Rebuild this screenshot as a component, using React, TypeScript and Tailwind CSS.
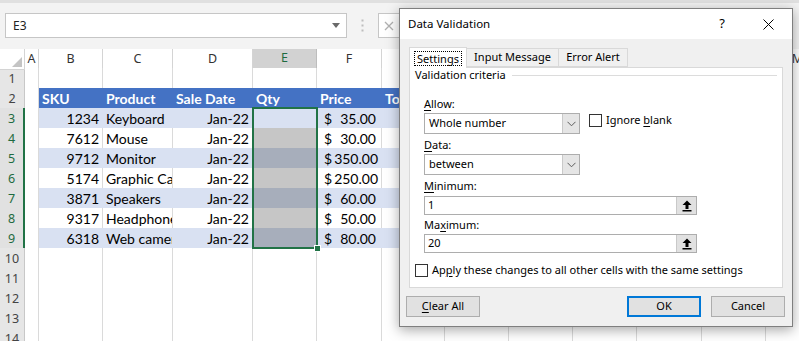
import React from "react";

const GRID =
  "grid grid-cols-[25px_14px_64px_70px_80px_64px_65px_63px_64px_64px_64px_65px_64px_64px]";
const LETTERS = ["A", "B", "C", "D", "E", "F", "G", "H", "I", "J", "K", "L", "M"];
const HEADS = ["", "SKU", "Product", "Sale Date", "Qty", "Price", "Total"];

const ITEMS = [
  { sku: "1234", product: "Keyboard", price: "35.00" },
  { sku: "7612", product: "Mouse", price: "30.00" },
  { sku: "9712", product: "Monitor", price: "350.00" },
  { sku: "5174", product: "Graphic Card", price: "250.00" },
  { sku: "3871", product: "Speakers", price: "60.00" },
  { sku: "9317", product: "Headphones", price: "50.00" },
  { sku: "6318", product: "Web camera", price: "80.00" },
];

const UI = "[font-family:'Noto_Sans',sans-serif]";
const SHEET = "[font-family:Lato,sans-serif]";

function Cell({ r, c }: { r: number; c: number }) {
  const inTable = r >= 2 && r <= 9 && c >= 1 && c <= 6;
  const isHead = inTable && r === 2;
  const item = inTable && r >= 3 ? ITEMS[r - 3] : null;
  const banded = inTable && r >= 3 && r % 2 === 1;
  const selected = c === 4 && r >= 4 && r <= 9;

  let tone = "bg-white border-r-[#dadada] border-b-[#dadada]";
  if (isHead) tone = "bg-[#4472c4] border-r-[#4472c4] border-b-[#8ea9db] text-white font-bold";
  else if (selected)
    tone =
      r % 2 === 1
        ? "bg-[#a7aebb] border-r-[#a7aebb] border-b-[#8e9ab3]"
        : "bg-[#c6c6c6] border-r-[#c6c6c6] border-b-[#8e9ab3]";
  else if (banded) tone = "bg-[#d9e1f2] border-r-[#d9e1f2] border-b-[#8ea9db]";
  else if (inTable) tone = "bg-white border-r-[#dadada] border-b-[#8ea9db]";

  let content: React.ReactNode = null;
  let align = "justify-start pl-[3px]";
  if (isHead) {
    content = HEADS[c];
  } else if (item) {
    if (c === 1) {
      content = item.sku;
      align = "justify-end pr-[3px]";
    } else if (c === 2) {
      content = item.product;
    } else if (c === 3) {
      content = "Jan-22";
      align = "justify-end pr-[3px]";
    } else if (c === 5) {
      content = (
        <>
          <span>$</span>
          <span>{item.price}</span>
        </>
      );
      align = "justify-between pl-[7px] pr-[5px] gap-[2px]";
    }
  }

  return (
    <div
      className={`flex items-start pt-[2px] overflow-hidden whitespace-nowrap border-r border-b leading-[17px] ${align} ${tone}`}
    >
      {content}
    </div>
  );
}

function RowHead({ r }: { r: number }) {
  const sel = r >= 3 && r <= 9;
  return (
    <div
      className={`flex items-center justify-center pt-[2px] border-b border-b-[#d4d4d4] ${UI} text-[12.5px] ${
        sel
          ? "bg-[#e1e1e1] text-[#1e6b40] border-r-2 border-r-[#217346]"
          : "bg-[#e6e6e6] text-[#444] border-r border-r-[#c8c8c8]"
      }`}
    >
      {r}
    </div>
  );
}

function Chevron() {
  return (
    <svg width="9" height="6" viewBox="0 0 9 6" fill="none">
      <path d="M0.5 0.8L4.5 4.8L8.5 0.8" stroke="#5c5c5c" strokeWidth="1" />
    </svg>
  );
}

function UpArrow() {
  return (
    <svg width="10" height="12" viewBox="0 0 10 12">
      <path d="M5 0.5L9.5 5H6.5V9H3.5V5H0.5Z" fill="#000" />
      <rect x="0.5" y="10" width="9" height="1.5" fill="#000" />
    </svg>
  );
}

function Select({ value }: { value: string }) {
  return (
    <div className="w-[156px] h-[21px] border border-[#adadad] bg-white flex">
      <div className="flex-1 flex items-center pl-[4px]">{value}</div>
      <div className="w-[17px] bg-[#e5e5e5] border-l border-[#c9c9c9] flex items-center justify-center">
        <Chevron />
      </div>
    </div>
  );
}

function RefInput({ value }: { value: string }) {
  return (
    <div className="w-[273px] h-[19px] border border-[#adadad] bg-white flex">
      <div className="flex-1 flex items-center pl-[3px]">{value}</div>
      <div className="w-[20px] bg-[#e1e1e1] border-l border-[#c9c9c9] flex items-center justify-center">
        <UpArrow />
      </div>
    </div>
  );
}

function Check() {
  return <span className="w-[13px] h-[13px] border border-[#333] bg-white shrink-0" />;
}

function U({ children }: { children: React.ReactNode }) {
  return <span className="underline decoration-1 underline-offset-[2px]">{children}</span>;
}

export default function App() {
  const rows = Array.from({ length: 14 }, (_, i) => i + 1);

  return (
    <div className="relative w-[799px] h-[341px] overflow-hidden bg-white">
      {/* formula bar */}
      <div className="h-[49px] bg-[#f3f3f3] border-t-[3px] border-[#e0e0e0] flex items-start pt-[10px]">
        <div className={`ml-[5px] w-[342px] h-[25px] bg-white border border-[#c6c6c6] flex items-center pl-[7px] pr-[6px] ${UI} text-[12px] text-[#222]`}>
          <span>E3</span>
          <svg className="ml-auto" width="8" height="5" viewBox="0 0 8 5">
            <path d="M0 0H8L4 5Z" fill="#6a6a6a" />
          </svg>
        </div>
        <div className="w-[31px] h-[25px] flex items-center justify-center">
          <svg width="3" height="13" viewBox="0 0 3 13">
            <rect x="0.5" y="0.5" width="2" height="2" fill="#bdbdbd" />
            <rect x="0.5" y="5.5" width="2" height="2" fill="#bdbdbd" />
            <rect x="0.5" y="10.5" width="2" height="2" fill="#bdbdbd" />
          </svg>
        </div>
        <div className="w-[120px] h-[25px] bg-white border border-[#c6c6c6] flex items-center pl-[5px]">
          <svg width="10" height="10" viewBox="0 0 10 10">
            <path d="M1 1L9 9M9 1L1 9" stroke="#b0b0b0" strokeWidth="1.3" />
          </svg>
        </div>
      </div>

      {/* sheet */}
      <div className={`relative ${SHEET} text-[14px] text-black`}>
        <div className={`${GRID} h-[19px]`}>
          <div className="relative bg-white border-r border-b border-[#d4d4d4]">
            <svg className="absolute right-[2px] bottom-[2px]" width="10" height="10" viewBox="0 0 10 10">
              <path d="M10 0V10H0Z" fill="#c4c4c4" />
            </svg>
          </div>
          {LETTERS.map((l) => (
            <div
              key={l}
              className={`flex items-center justify-center ${UI} text-[12.5px] ${
                l === "E"
                  ? "bg-[#d2d2d2] text-[#1e6b40] border-r border-r-[#bdbdbd] border-b-2 border-b-[#217346]"
                  : "bg-white text-[#333] border-r border-b border-[#d4d4d4]"
              }`}
            >
              {l}
            </div>
          ))}
        </div>

        {rows.map((r) => (
          <div key={r} className={`${GRID} h-[20px]`}>
            <RowHead r={r} />
            {LETTERS.map((l, c) => (
              <Cell key={l} r={r} c={c} />
            ))}
          </div>
        ))}

        {/* selection E3:E9 */}
        <div className="absolute left-[252px] top-[58px] w-[66px] h-[142px] border-2 border-[#217346]">
          <div className="absolute right-[-5px] bottom-[-5px] w-[7px] h-[7px] bg-[#217346] border border-white" />
        </div>
      </div>

      {/* Data Validation dialog */}
      <div
        className={`absolute left-[399px] top-[8px] w-[394px] h-[319px] border border-[#7f7f7f] bg-[#f0f0f0] shadow-[0_3px_12px_rgba(0,0,0,0.35)] flex flex-col ${UI} text-[11px] text-black`}
      >
        <div className="h-[30px] bg-white flex items-center pl-[8px] shrink-0">
          <span className="text-[11.5px]">Data Validation</span>
          <span className="ml-auto text-[13px]">?</span>
          <svg className="ml-[38px] mr-[18px]" width="11" height="11" viewBox="0 0 11 11">
            <path d="M0.5 0.5L10.5 10.5M10.5 0.5L0.5 10.5" stroke="#000" strokeWidth="1" />
          </svg>
        </div>

        <div className="pt-[8px] pl-[9px] flex items-end whitespace-nowrap">
          <div className="h-[21px] w-[58px] bg-white border border-b-0 border-[#d9d9d9] -mb-px relative z-10 flex items-center justify-center">
            <span className="border border-dotted border-black px-[2px] leading-[13px]">Settings</span>
          </div>
          <div className="h-[19px] w-[92px] border border-[#d9d9d9] border-l-0 flex items-center justify-center">
            Input Message
          </div>
          <div className="h-[19px] w-[69px] border border-[#d9d9d9] border-l-0 flex items-center justify-center">
            Error Alert
          </div>
        </div>

        <div className="ml-[9px] w-[374px] h-[221px] bg-white border border-[#d9d9d9] flex flex-col">
          <div className="h-[15px] flex items-center pl-[5px] pr-[5px]">
            <span>Validation criteria</span>
            <span className="flex-1 h-px bg-[#dcdcdc] ml-[6px]" />
          </div>

          <div className="ml-[14px] mt-[13px] h-[16px] flex items-center">
            <span>
              <U>A</U>llow:
            </span>
          </div>
          <div className="ml-[14px] mt-[1px] flex items-center">
            <Select value="Whole number" />
            <div className="ml-[9px] flex items-center gap-[4px] -mt-[6px]">
              <Check />
              <span>
                Ignore <U>b</U>lank
              </span>
            </div>
          </div>

          <div className="ml-[14px] mt-[3px] h-[16px] flex items-center">
            <span>
              <U>D</U>ata:
            </span>
          </div>
          <div className="ml-[14px] mt-[1px]">
            <Select value="between" />
          </div>

          <div className="ml-[14px] mt-[3px] h-[16px] flex items-center">
            <span>
              <U>M</U>inimum:
            </span>
          </div>
          <div className="ml-[14px] mt-[2px]">
            <RefInput value="1" />
          </div>

          <div className="ml-[14px] mt-[2px] h-[16px] flex items-center">
            <span>
              Ma<U>x</U>imum:
            </span>
          </div>
          <div className="ml-[14px] mt-[1px]">
            <RefInput value="20" />
          </div>

          <div className="ml-[5px] mt-[9px] h-[16px] flex items-center gap-[4px]">
            <Check />
            <span>
              Ap<U>p</U>ly these changes to all other cells with the same settings
            </span>
          </div>
        </div>

        <div className="mt-[8px] flex">
          <div className="ml-[6px] w-[74px] h-[21px] bg-[#e1e1e1] border border-[#adadad] flex items-center justify-center">
            <span>
              <U>C</U>lear All
            </span>
          </div>
          <div className="ml-auto w-[74px] h-[21px] bg-[#e1e1e1] border-2 border-[#0078d7] flex items-center justify-center">
            OK
          </div>
          <div className="ml-[10px] mr-[7px] w-[74px] h-[21px] bg-[#e1e1e1] border border-[#adadad] flex items-center justify-center">
            Cancel
          </div>
        </div>
      </div>
    </div>
  );
}
